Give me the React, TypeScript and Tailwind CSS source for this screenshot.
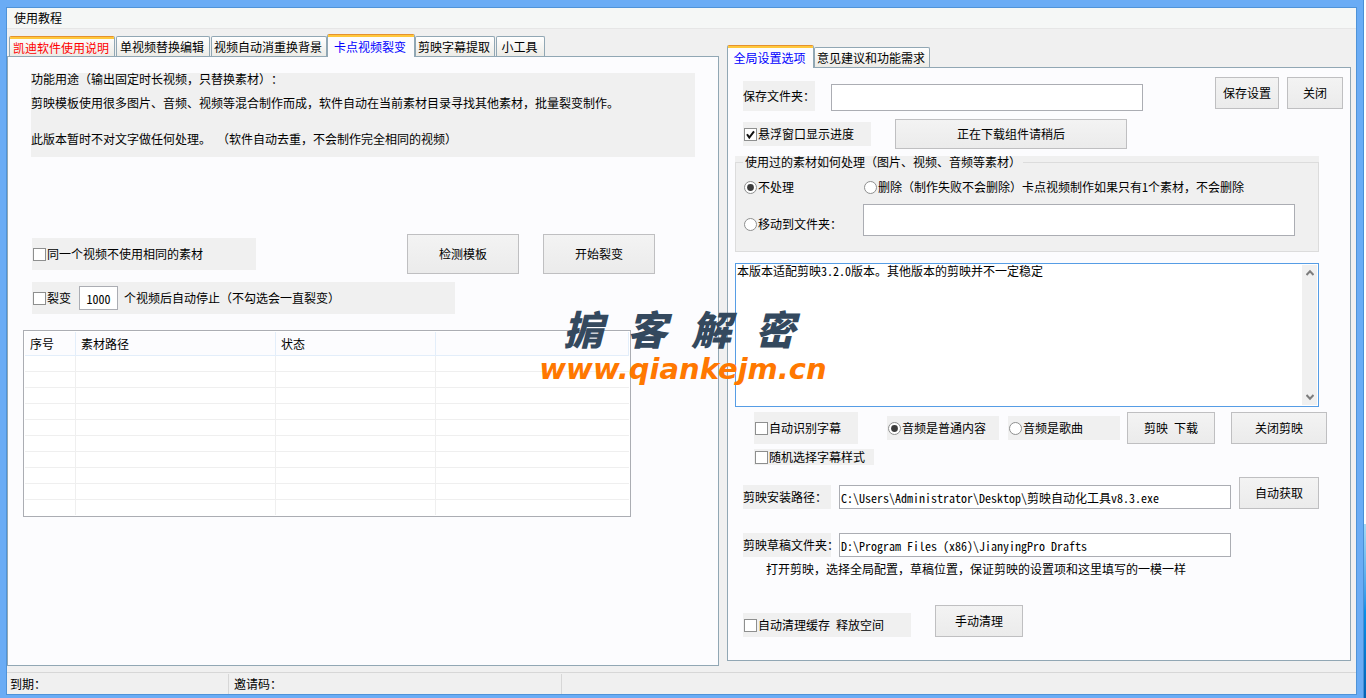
import clsx from "clsx"
import { ReactNode, useState } from "react"

const leftTabs = [
    { label: "凯迪软件使用说明", width: "w-[106px]" },
    { label: "单视频替换编辑", width: "w-[94px]" },
    { label: "视频自动消重换背景", width: "w-[116px]" },
    { label: "卡点视频裂变", width: "w-[88px]" },
    { label: "剪映字幕提取", width: "w-[80px]" },
    { label: "小工具", width: "w-[49px]" },
]

const rightTabs = [
    { label: "全局设置选项", width: "w-[87px]" },
    { label: "意见建议和功能需求", width: "w-[116px]" },
]

interface TabProps {
    label: string
    width: string
    active?: boolean
    hot?: boolean
    onClick?: () => void
}

function Tab({ label, width, active, hot, onClick }: TabProps) {
    return (
        <button
            type="button"
            role="tab"
            aria-selected={!!active}
            onClick={onClick}
            className={clsx(
                "shrink-0 flex flex-col rounded-t-xs border-x border-[#91a7b4] overflow-hidden",
                width,
                active ? "relative h-[23px] -mb-px bg-[#fcfcfe] text-[#0000ff]" : "h-5 bg-linear-to-b from-white to-[#ecebe6]",
                hot && "text-[#ff0000]",
                !active && !hot && "border-t"
            )}
        >
            {(active || hot) && <span className="w-full h-[3px] shrink-0 border-t border-[#e5912f] bg-[#ffc83c]" />}
            <span className="w-full flex-1 flex items-center justify-center whitespace-nowrap pr-0.5">{label}</span>
        </button>
    )
}

function PushButton({ className, children }: { className?: string; children: ReactNode }) {
    return (
        <button
            type="button"
            className={clsx(
                "shrink-0 border border-[#bfbfc1] bg-linear-to-b from-[#f3f3f3] to-[#ebebeb] whitespace-nowrap",
                className
            )}
        >
            {children}
        </button>
    )
}

interface CheckProps {
    label: string
    className?: string
    defaultChecked?: boolean
}

function CheckBox({ label, className, defaultChecked }: CheckProps) {
    return (
        <label className={clsx("shrink-0 flex items-center gap-px pl-px bg-[#f0f0f0] whitespace-nowrap", className)}>
            <span className="grid">
                <input
                    type="checkbox"
                    defaultChecked={defaultChecked}
                    className="peer col-start-1 row-start-1 size-[13px] appearance-none border border-[#8e8f8f] bg-white"
                />
                <svg
                    viewBox="0 0 13 13"
                    className="col-start-1 row-start-1 size-[13px] invisible peer-checked:visible pointer-events-none"
                >
                    <path d="M3 6.2 5.3 9.6 10 3.4" fill="none" stroke="#111" strokeWidth="2" />
                </svg>
            </span>
            {label}
        </label>
    )
}

function Radio({ label, name, className, defaultChecked }: CheckProps & { name: string }) {
    return (
        <label className={clsx("shrink-0 flex items-center gap-px pl-px bg-[#f0f0f0] whitespace-nowrap", className)}>
            <span className="grid">
                <input
                    type="radio"
                    name={name}
                    defaultChecked={defaultChecked}
                    className="peer col-start-1 row-start-1 size-[13px] appearance-none rounded-full border border-[#8e8f8f] bg-white"
                />
                <svg
                    viewBox="0 0 13 13"
                    className="col-start-1 row-start-1 size-[13px] invisible peer-checked:visible pointer-events-none"
                >
                    <circle cx="6.5" cy="6.5" r="3.4" fill="#3c3c3c" />
                </svg>
            </span>
            {label}
        </label>
    )
}

const fieldClass = "shrink-0 border border-[#abadb3] bg-white px-px outline-none"

function FissionPanel() {
    return (
        <div className="flex-1 border border-[#91a7b4] bg-[#fcfcfe] pb-8">
            <div className="mx-[23px] mt-4 h-[84px] bg-[#f0f0f0] leading-3">
                <p>功能用途（输出固定时长视频，只替换素材）：</p>
                <p className="mt-3">剪映模板使用很多图片、音频、视频等混合制作而成，软件自动在当前素材目录寻找其他素材，批量裂变制作。</p>
                <p className="mt-6">此版本暂时不对文字做任何处理。 （软件自动去重，不会制作完全相同的视频）</p>
            </div>

            <div className="mt-[77px] pl-6 pr-[63px] flex items-center justify-between">
                <CheckBox label="同一个视频不使用相同的素材" className="w-56 h-8" />
                <div className="flex gap-6">
                    <PushButton className="w-28 h-10">检测模板</PushButton>
                    <PushButton className="w-28 h-10">开始裂变</PushButton>
                </div>
            </div>

            <div className="mt-2 ml-6 w-[423px] h-8 flex items-center bg-[#f0f0f0]">
                <CheckBox label="裂变" />
                <input
                    type="text"
                    id="stop-count"
                    defaultValue="1000"
                    className="ml-2 w-[39px] h-6 shrink-0 border border-[#abadb3] bg-white text-center outline-none"
                />
                <label htmlFor="stop-count" className="ml-1.5">
                    个视频后自动停止（不勾选会一直裂变）
                </label>
            </div>

            <div className="mt-4 ml-[15px] w-[608px] border border-[#abadb3] bg-white p-px">
                <table className="w-full table-fixed border-separate border-spacing-0">
                    <thead>
                        <tr className="h-6 bg-[#fcfcfe] text-left">
                            <th className="w-[51px] p-0 pl-[5px] font-normal border-r border-b border-[#e3eefa]">序号</th>
                            <th className="w-[200px] p-0 pl-[5px] font-normal border-r border-b border-[#e3eefa]">素材路径</th>
                            <th className="w-[160px] p-0 pl-[5px] font-normal border-r border-b border-[#e3eefa]">状态</th>
                            <th className="p-0 border-r border-b border-[#e3eefa]"></th>
                        </tr>
                    </thead>
                    <tbody>
                        {Array.from({ length: 10 }, (_, i) => (
                            <tr key={i} className="group h-4 last:h-[15px]">
                                <td className="p-0 border-r border-b border-[#efefef] group-last:border-b-0"></td>
                                <td className="p-0 border-r border-b border-[#efefef] group-last:border-b-0"></td>
                                <td className="p-0 border-r border-b border-[#efefef] group-last:border-b-0"></td>
                                <td className="p-0 border-b border-[#efefef] group-last:border-b-0"></td>
                            </tr>
                        ))}
                    </tbody>
                </table>
            </div>
        </div>
    )
}

function SettingsPanel() {
    return (
        <div className="flex-1 border border-[#91a7b4] bg-[#fcfcfe] pt-[9px] pb-[23px]">
            <div className="pl-[15px] pr-[7px] h-[34px] flex items-end">
                <label htmlFor="save-dir" className="w-[72px] h-[30px] shrink-0 flex items-center bg-[#f0f0f0]">
                    保存文件夹：
                </label>
                <input id="save-dir" type="text" className={clsx(fieldClass, "ml-4 w-[312px] h-[27px]")} />
                <div className="ml-auto self-start flex gap-2">
                    <PushButton className="w-16 h-8">保存设置</PushButton>
                    <PushButton className="w-14 h-8">关闭</PushButton>
                </div>
            </div>

            <div className="mt-2 pl-[15px] flex items-center gap-6">
                <CheckBox label="悬浮窗口显示进度" className="w-32 h-6" defaultChecked />
                <PushButton className="w-[232px] h-[30px]">正在下载组件请稍后</PushButton>
            </div>

            <div className="mt-[7px] ml-[7px] mr-[31px] bg-[#f0f0f0]">
                <fieldset className="border border-[#dcdcdc] pl-[7px] pb-[15px]">
                    <legend className="px-0.5 leading-3">使用过的素材如何处理（图片、视频、音频等素材）</legend>
                    <div className="mt-[7px] grid grid-cols-[120px_432px] gap-y-[5px]">
                        <Radio name="used" label="不处理" className="h-6" defaultChecked />
                        <Radio name="used" label="删除（制作失败不会删除）卡点视频制作如果只有1个素材，不会删除" className="h-6" />
                        <Radio name="used" label="移动到文件夹：" className="pt-2" />
                        <input type="text" aria-label="移动到文件夹" className={clsx(fieldClass, "h-8")} />
                    </div>
                </fieldset>
            </div>

            <div className="mt-[11px] ml-[7px] mr-[31px] h-36 flex border border-[#569de5] bg-white p-px">
                <textarea
                    aria-label="版本说明"
                    className="flex-1 resize-none leading-3 outline-none"
                    defaultValue="本版本适配剪映3.2.0版本。其他版本的剪映并不一定稳定"
                />
                <div className="w-[15px] flex flex-col items-center justify-between py-1 bg-[#f0f0f0]">
                    <svg viewBox="0 0 8 8" className="size-2">
                        <path d="M0.5 6 4 2.2 7.5 6" fill="none" stroke="#7d7d7d" strokeWidth="2" />
                    </svg>
                    <svg viewBox="0 0 8 8" className="size-2">
                        <path d="M0.5 2 4 5.8 7.5 2" fill="none" stroke="#7d7d7d" strokeWidth="2" />
                    </svg>
                </div>
            </div>

            <div className="mt-[5px] pl-[26px] flex items-center">
                <CheckBox label="自动识别字幕" className="w-[104px] h-8" />
                <Radio name="audio" label="音频是普通内容" className="ml-[29px] w-28 h-6" defaultChecked />
                <Radio name="audio" label="音频是歌曲" className="ml-[9px] w-28 h-6" />
                <PushButton className="ml-[7px] w-[88px] h-8">剪映 下载</PushButton>
                <PushButton className="ml-4 w-24 h-8">关闭剪映</PushButton>
            </div>
            <div className="mt-[5px] pl-[26px] flex">
                <CheckBox label="随机选择字幕样式" className="w-[120px] h-4" />
            </div>

            <div className="mt-3 pl-[15px] flex items-end gap-2">
                <label htmlFor="install-path" className="w-[88px] h-6 shrink-0 flex items-center bg-[#f0f0f0] whitespace-nowrap">
                    剪映安装路径：
                </label>
                <input
                    id="install-path"
                    type="text"
                    defaultValue="C:\Users\Administrator\Desktop\剪映自动化工具v8.3.exe"
                    className={clsx(fieldClass, "w-[392px] h-6")}
                />
                <PushButton className="w-20 h-8">自动获取</PushButton>
            </div>
            <div className="mt-6 pl-[15px] flex items-end gap-2">
                <label htmlFor="draft-path" className="w-[88px] h-6 shrink-0 flex items-center bg-[#f0f0f0] whitespace-nowrap">
                    剪映草稿文件夹：
                </label>
                <input
                    id="draft-path"
                    type="text"
                    defaultValue="D:\Program Files (x86)\JianyingPro Drafts"
                    className={clsx(fieldClass, "w-[392px] h-6")}
                />
            </div>
            <p className="mt-1.5 pl-[38px] leading-3">打开剪映，选择全局配置，草稿位置，保证剪映的设置项和这里填写的一模一样</p>

            <div className="mt-[30px] pl-[15px] flex items-end gap-6">
                <CheckBox label="自动清理缓存 释放空间" className="w-[168px] h-6" />
                <PushButton className="w-[88px] h-8">手动清理</PushButton>
            </div>
        </div>
    )
}

export default function App() {
    const [leftTab, setLeftTab] = useState(3)
    const [rightTab, setRightTab] = useState(0)

    return (
        <div className="relative min-h-screen flex bg-white text-xs leading-4 text-black font-['Noto_Sans_Mono_CJK_SC','Noto_Sans_CJK_SC',sans-serif] [text-spacing-trim:space-all]">
            <div className="flex-1 flex flex-col bg-[#6aacf5] pt-[7px] pl-1.5 pr-1.5 pb-[3px] border-r border-[#4a8fd6]">
                <div className="flex-1 flex flex-col border border-[#4f93d8] bg-[#f0f0f0]">
                    <nav className="h-[21px] px-[7px] flex items-center bg-[#f5f7f6] border-b border-[#e6e6e6]">
                        <button type="button">使用教程</button>
                    </nav>

                    <main className="flex-1 grid grid-cols-[712fr_624fr] gap-2 pr-[5px]">
                        <section className="flex flex-col pt-[5px] pb-1.5">
                            <div role="tablist" className="h-[22px] pl-0.5 flex items-end">
                                {leftTabs.map((tab, i) => (
                                    <div key={tab.label} className={clsx("flex items-end", [1, 2, 5].includes(i) && "ml-px")}>
                                        <Tab {...tab} active={leftTab === i} hot={i === 0} onClick={() => setLeftTab(i)} />
                                    </div>
                                ))}
                            </div>
                            <FissionPanel />
                        </section>

                        <section className="flex flex-col pt-4 pb-[11px]">
                            <div role="tablist" className="h-[22px] flex items-end">
                                {rightTabs.map((tab, i) => (
                                    <Tab key={tab.label} {...tab} active={rightTab === i} onClick={() => setRightTab(i)} />
                                ))}
                            </div>
                            <SettingsPanel />
                        </section>
                    </main>

                    <footer className="h-[22px] flex items-stretch border-t border-[#d7d7d7]">
                        <div className="w-[222px] mt-px pl-[3px] flex items-center border-r border-[#d7d7d7]">到期：</div>
                        <div className="w-[333px] mt-px pl-[5px] flex items-center border-r border-[#d7d7d7]">邀请码：</div>
                    </footer>
                </div>
            </div>

            {/* sliver of the desktop behind the window */}
            <div className="w-0.5 flex flex-col">
                <div className="flex-3 bg-white"></div>
                <div className="flex-1 bg-linear-to-b from-[#a5dcf5] via-[#0a8fe8] to-[#0563b5]"></div>
            </div>

            <div className="absolute inset-0 pb-1 flex flex-col items-center justify-center pointer-events-none italic">
                <div className="flex gap-6 pr-2 text-[40px] leading-11 font-black text-[#34495e] font-['Liberation_Sans','Noto_Sans_CJK_SC',sans-serif]">
                    <span>掮</span>
                    <span>客</span>
                    <span>解</span>
                    <span>密</span>
                </div>
                <div className="text-[29px] leading-8 font-bold text-[#ff7800] font-['DejaVu_Sans',sans-serif]">
                    www.qiankejm.cn
                </div>
            </div>
        </div>
    )
}
